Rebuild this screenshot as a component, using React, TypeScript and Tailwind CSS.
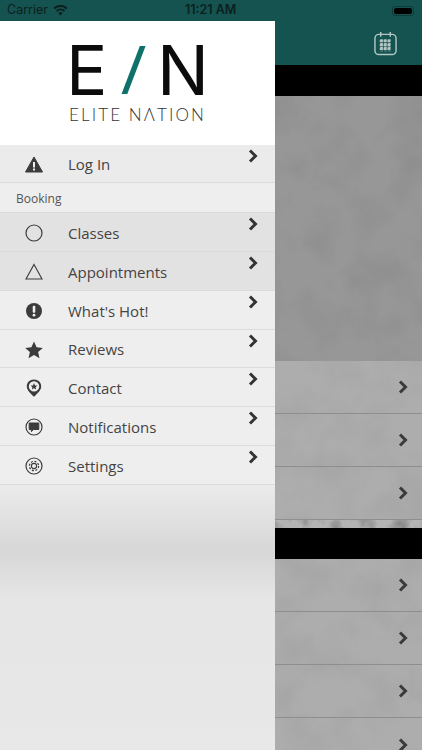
const ink = "#3b3b3b"

// Chevron used on every list row
function Chevron({ className }: { className: string }) {
  return (
    <svg viewBox="0 0 10 14" className={className} fill="none" stroke="currentColor" strokeWidth="3">
      <path d="M2 1.5 L7.5 7 L2 12.5" />
    </svg>
  )
}

// Mottled concrete look of the page behind the drawer
function Mottle({ id, seed, opacity, freq = "0.025", cut = "-0.95" }: { id: string; seed: number; opacity: number; freq?: string; cut?: string }) {
  return (
    <svg className="absolute inset-0 w-full h-full" style={{ opacity }}>
      <filter id={id}>
        <feTurbulence type="fractalNoise" baseFrequency={freq} numOctaves="5" seed={seed} />
        <feColorMatrix values={`0 0 0 0 0.22  0 0 0 0 0.22  0 0 0 0 0.22  2.4 0 0 0 ${cut}`} />
      </filter>
      <rect width="100%" height="100%" filter={`url(#${id})`} />
    </svg>
  )
}

const icons: Record<string, React.ReactNode> = {
  warning: (
    <>
      <path d="M10 2 L18.5 17 H1.5 Z" fill={ink} stroke={ink} strokeLinejoin="round" />
      <rect x="9" y="7" width="2" height="5.5" fill="#eee" />
      <rect x="9" y="13.5" width="2" height="2" fill="#eee" />
    </>
  ),
  circle: <circle cx="10" cy="10" r="8" fill="none" stroke={ink} strokeWidth="1.2" />,
  triangle: <path d="M10 2.5 L18 17 H2 Z" fill="none" stroke={ink} strokeWidth="1.1" />,
  alert: (
    <>
      <circle cx="10" cy="10" r="8" fill={ink} />
      <rect x="8.7" y="4.8" width="2.6" height="7" rx="1" fill="#eee" />
      <circle cx="10" cy="14.2" r="1.4" fill="#eee" />
    </>
  ),
  star: (
    <path
      d="M10 1.5 L12.6 7.3 L18.8 7.9 L14.1 12 L15.5 18.2 L10 15 L4.5 18.2 L5.9 12 L1.2 7.9 L7.4 7.3 Z"
      fill={ink}
    />
  ),
  pin: (
    <>
      <path
        d="M10 1.5 C5.6 1.5 2.8 4.6 2.8 8.4 C2.8 12.4 7 15.4 10 18.8 C13 15.4 17.2 12.4 17.2 8.4 C17.2 4.6 14.4 1.5 10 1.5 Z"
        fill={ink}
      />
      <circle cx="10" cy="8.4" r="5.2" fill="#eee" />
      <path
        d="M10 5 L11 7.4 L13.4 7.6 L11.6 9.2 L12.1 11.6 L10 10.3 L7.9 11.6 L8.4 9.2 L6.6 7.6 L9 7.4 Z"
        fill={ink}
      />
    </>
  ),
  chat: (
    <>
      <circle cx="10" cy="10" r="8" fill="none" stroke={ink} strokeWidth="1.2" />
      <path d="M5.2 6 H14.8 V12.5 H9.5 L7.4 14.6 V12.5 H5.2 Z" fill={ink} strokeLinejoin="round" stroke={ink} />
    </>
  ),
  gear: (
    <>
      <circle cx="10" cy="10" r="8" fill="none" stroke={ink} strokeWidth="1.2" />
      <circle cx="10" cy="10" r="2.6" fill="none" stroke={ink} strokeWidth="1.1" />
      <circle cx="10" cy="10" r="4.6" fill="none" stroke={ink} strokeWidth="1.2" strokeDasharray="2 1.6" />
    </>
  ),
}

function MenuIcon({ name }: { name: string }) {
  return (
    <svg viewBox="0 0 20 20" className="w-5 h-5 shrink-0">
      {icons[name]}
    </svg>
  )
}

function MenuRow({ icon, label, height, active }: { icon: string; label: string; height: string; active?: boolean }) {
  return (
    <div className={`relative flex items-center pl-[24px] pt-[2px] border-b border-[#dcdbdb] ${height} ${active ? "bg-[#e3e2e2]" : ""}`}>
      <MenuIcon name={icon} />
      <span className="ml-[24px] text-[15px] text-[#444444]">{label}</span>
      <Chevron className="absolute left-[248px] top-[4px] w-[10px] h-[14px] text-[#333333]" />
    </div>
  )
}

function ListRow({ last }: { last?: boolean }) {
  return (
    <div className={`h-[53px] flex items-center justify-end pr-[14px] ${last ? "" : "border-b border-[#8e8e8e]"}`}>
      <Chevron className="w-[10px] h-[14px] text-[#3a3a3a]" />
    </div>
  )
}

function BlackBar({ height }: { height: string }) {
  return <div className={`bg-black ${height}`} />
}

export default function App() {
  return (
    <div className="w-[422px] h-[750px] overflow-hidden flex flex-col bg-[#14534f] font-['Open_Sans',sans-serif]">
      {/* Status bar */}
      <div className="relative h-[21px] shrink-0 flex items-center pl-[7px] pr-[8px] text-[#0c1f1e] font-['Inter',sans-serif]">
        <span className="text-[12.5px]">Carrier</span>
        <svg viewBox="0 0 16 12" className="ml-[5px] w-[15px] h-[11px]" fill="#0c1f1e">
          <path d="M8 11.5 L5.6 8.6 A3.6 3.6 0 0 1 10.4 8.6 Z" />
          <path d="M4.4 7.3 L3 5.7 A7.4 7.4 0 0 1 13 5.7 L11.6 7.3 A5.4 5.4 0 0 0 4.4 7.3 Z" />
          <path d="M1.9 4.5 L0.4 2.9 A11 11 0 0 1 15.6 2.9 L14.1 4.5 A9 9 0 0 0 1.9 4.5 Z" />
        </svg>
        <span className="absolute left-[185px] text-[12.5px] font-semibold">11:21 AM</span>
        <div className="ml-auto w-[22px] h-[10px] rounded-[3px] border border-[#0f3b38] p-px">
          <div className="w-full h-full rounded-[2px] bg-black" />
        </div>
      </div>

      <div className="flex-1 flex min-h-0">
        {/* Drawer */}
        <div className="w-[275px] shrink-0 flex flex-col bg-[#efeeee]">
          <div className="h-[124px] shrink-0 bg-white flex flex-col items-center">
            <div className="relative w-[133px] h-[50px] mt-[24px] flex justify-between font-['Inter',sans-serif] text-[#0c0c0c] text-[69px] leading-[50px]">
              <span className="ml-[-5px]">E</span>
              <svg viewBox="0 0 30 52" className="absolute left-[49px] top-0 w-[30px] h-[50px]">
                <polygon points="20,1 26,1 7,51 1,51" fill="#0e726b" />
              </svg>
              <span className="mr-[-5px]">N</span>
            </div>
            <div className="mt-[12px] text-[17px] leading-[16px] tracking-[2.1px] text-[#333333] font-['Lato',sans-serif] font-light whitespace-nowrap">
              ELITE NΛTION
            </div>
          </div>

          <MenuRow icon="warning" label="Log In" height="h-[38px] bg-[#ecebeb]" />
          <div className="h-[30px] flex items-center pl-[16px] pt-[2px] text-[12px] text-[#555555] border-b border-[#dcdbdb]">Booking</div>
          <MenuRow icon="circle" label="Classes" height="h-[39px]" active />
          <MenuRow icon="triangle" label="Appointments" height="h-[39px]" active />
          <MenuRow icon="alert" label="What's Hot!" height="h-[39px]" />
          <MenuRow icon="star" label="Reviews" height="h-[38px]" />
          <MenuRow icon="pin" label="Contact" height="h-[39px]" />
          <MenuRow icon="chat" label="Notifications" height="h-[39px]" />
          <MenuRow icon="gear" label="Settings" height="h-[39px]" />

          <div className="flex-1 bg-[linear-gradient(to_bottom,#ebebeb_0px,#d9d9d9_60px,#d8d8d8_70px,#e6e6e6_115px,#e8e8e8_100%)]" />
        </div>

        {/* Page behind the drawer */}
        <div className="flex-1 min-w-0 flex flex-col">
          <div className="h-[44px] shrink-0 flex items-center justify-end pr-[25px]">
            <svg viewBox="0 0 24 26" className="w-[23px] h-[25px]" fill="none" stroke="#b4c6c4" strokeWidth="1.5">
              <rect x="1" y="3.5" width="22" height="21" rx="4" />
              <path d="M7 1 V6 M17 1 V6" />
              <path d="M6 10.5 H18 M6 14.5 H18 M6 18.5 H18 M8 8.5 V21 M12 8.5 V21 M16 8.5 V21" strokeWidth="2.6" strokeDasharray="3 1" />
            </svg>
          </div>
          <BlackBar height="h-[31px] shrink-0" />
          <div className="relative h-[265px] shrink-0 bg-[#979797]">
            <Mottle id="hero" seed={4} opacity={0.32} />
          </div>
          <div className="relative shrink-0 bg-[#adadad]">
            <Mottle id="listA" seed={9} opacity={0.14} />
            <div className="relative">
              <ListRow />
              <ListRow />
              <ListRow />
            </div>
          </div>
          <div className="relative h-[8px] shrink-0 overflow-hidden bg-[#b4b4b4]">
            <Mottle id="strip" seed={21} opacity={0.9} freq="0.05" cut="-1.05" />
          </div>
          <BlackBar height="h-[31px] shrink-0" />
          <div className="relative flex-1 min-h-0 overflow-hidden bg-[#adadad]">
            <Mottle id="listB" seed={15} opacity={0.14} />
            <div className="relative">
              <ListRow />
              <ListRow />
              <ListRow />
              <ListRow last />
            </div>
          </div>
        </div>
      </div>
    </div>
  )
}
